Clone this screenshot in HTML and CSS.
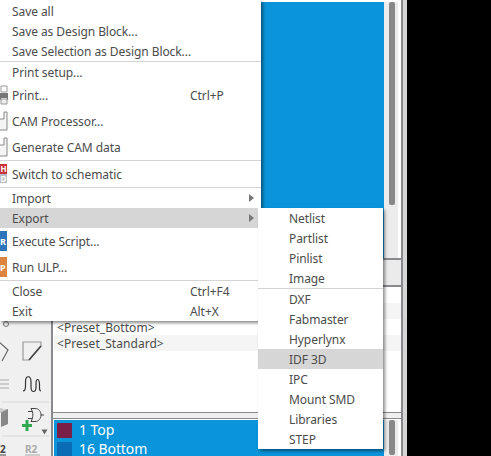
FILE: index.html
```html
<!DOCTYPE html>
<html lang="en">
<head>
  <meta charset="UTF-8" />
  <title>Board Editor - File menu</title>
  <link rel="stylesheet" href="styles.css">
</head>

<body>
<div class="app">
  <!-- Left toolbar -->
  <aside class="toolbar">
    <svg class="tool-icons" width="51" height="135" viewBox="0 321 51 135">
      <circle cx="6" cy="324" r="2.5" fill="none" stroke="#777" />
      <path d="M-2 341 L8 350 L2 361" fill="none" stroke="#666" stroke-width="1.2" />
      <path d="M23 342 H41 V346 L29 360 H23 Z" fill="none" stroke="#999" stroke-width="1.2" />
      <path d="M29 360 L41 346" fill="none" stroke="#444" stroke-width="1.6" />
      <path d="M0 380 H9 M0 384 H9 M0 388 H9" stroke="#aaa" stroke-width="1.2" />
      <path d="M23 391 C25 391 25.5 389 25.5 386 V382 C25.5 375 31 375 31 382 V387 C31 393 36 393 36 387 V384 C36 378 39 378 39.5 384 V388 C39.5 390 40 391 41 391" fill="none" stroke="#333" stroke-width="1.2" />
      <path d="M1 411 L8 409 V424 L1 427 Z" fill="#888" />
      <path d="M0 413 L6 410 L1 408 L0 408 Z" fill="#ccc" />
      <path d="M31 408.5 H35 C43 408.5 43 421.5 35 421.5 H31 C33.5 417 33.5 413 31 408.5 Z M28 411.5 H32.5 M28 418.5 H32.5 M41 415 H44" fill="none" stroke="#444" />
      <path d="M27 420 V431 M22 425.5 H32" stroke="#2fa84f" stroke-width="3" />
      <path d="M41.5 429.5 H47.5 L44.5 434.5 Z" fill="#666" />
      <path d="M2 402 H49 M2 436 H49" stroke="#d8d8d8" />
      <text class="tool-num" x="0" y="453">2</text>
      <path d="M0 455 H6" stroke="#444" />
      <text class="tool-r2" x="25" y="453">R2</text>
      <path d="M25 455 H40" stroke="#aaa" />
    </svg>
  </aside>

  <main class="panel">
    <!-- Top list -->
    <section class="top-pane">
      <div class="blue-list"></div>
      <div class="scroll"><div class="thumb"></div></div>
    </section>
    <div class="pane-head"></div>

    <!-- Presets -->
    <section class="presets">
      <div class="preset"></div>
      <div class="preset alt"></div>
      <div class="preset">&lt;Preset_Bottom&gt;</div>
      <div class="preset alt">&lt;Preset_Standard&gt;</div>
    </section>
    <div class="split"></div>

    <!-- Layers -->
    <section class="layer-pane">
      <div class="layers">
        <div class="layer"><span class="swatch swatch-top"></span>1 Top</div>
        <div class="layer layer-last"><span class="swatch swatch-bottom"></span>16 Bottom</div>
      </div>
      <div class="scroll"><div class="thumb"></div></div>
    </section>
  </main>
</div>

<!-- File menu -->
<nav class="menu file-menu">
  <div class="item"><span class="slot"></span><span class="label">Save all</span></div>
  <div class="item"><span class="slot"></span><span class="label">Save as Design Block...</span></div>
  <div class="item"><span class="slot"></span><span class="label">Save Selection as Design Block...</span></div>
  <hr class="sep">
  <div class="item"><span class="slot"></span><span class="label">Print setup...</span></div>
  <div class="item tall">
    <span class="slot">
      <svg width="8" height="20" viewBox="0 0 8 20">
        <path d="M1 1 H7 V7 H1 Z" fill="#fff" stroke="#999" />
        <path d="M0 8 H8 V15 H7 V13 H1 V15 H0 Z" fill="#777" />
        <path d="M1 14 H7 V19 H1 Z" fill="#eee" stroke="#999" />
      </svg>
    </span>
    <span class="label">Print...</span><span class="key">Ctrl+P</span>
  </div>
  <div class="item tall">
    <span class="slot">
      <svg width="8" height="20" viewBox="0 0 8 20">
        <path d="M0 8 H4 V1 H7 V19 H0" fill="#f4f4f4" stroke="#888" />
      </svg>
    </span>
    <span class="label">CAM Processor...</span>
  </div>
  <div class="item tall">
    <span class="slot">
      <svg width="8" height="20" viewBox="0 0 8 20">
        <path d="M0 8 H4 V1 H7 V19 H0" fill="#f4f4f4" stroke="#888" />
      </svg>
    </span>
    <span class="label">Generate CAM data</span>
  </div>
  <hr class="sep">
  <div class="item tall">
    <span class="slot">
      <svg width="8" height="20" viewBox="0 0 8 20">
        <rect width="7" height="10" fill="#c8323a" />
        <rect y="10" width="7" height="9" fill="#b8bcc4" />
        <text class="badge badge-small" x="0.5" y="8">H</text>
        <text class="badge badge-small" x="0.5" y="17.5">D</text>
      </svg>
    </span>
    <span class="label">Switch to schematic</span>
  </div>
  <hr class="sep">
  <div class="item"><span class="slot"></span><span class="label">Import</span><span class="arrow"></span></div>
  <div class="item active"><span class="slot"></span><span class="label">Export</span><span class="arrow"></span></div>
  <div class="item tall">
    <span class="slot">
      <svg width="8" height="20" viewBox="0 0 8 20">
        <rect width="7" height="20" fill="#2f74b8" />
        <text class="badge" x="0" y="14">R</text>
      </svg>
    </span>
    <span class="label">Execute Script...</span>
  </div>
  <div class="item tall">
    <span class="slot">
      <svg width="8" height="20" viewBox="0 0 8 20">
        <rect width="7" height="20" fill="#dd8440" />
        <text class="badge" x="0" y="14">P</text>
      </svg>
    </span>
    <span class="label">Run ULP...</span>
  </div>
  <hr class="sep">
  <div class="item"><span class="slot"></span><span class="label">Close</span><span class="key">Ctrl+F4</span></div>
  <div class="item"><span class="slot"></span><span class="label">Exit</span><span class="key">Alt+X</span></div>
</nav>

<!-- Export submenu -->
<nav class="menu export-menu">
  <div class="item"><span class="label">Netlist</span></div>
  <div class="item"><span class="label">Partlist</span></div>
  <div class="item"><span class="label">Pinlist</span></div>
  <div class="item"><span class="label">Image</span></div>
  <hr class="sep flush">
  <div class="item"><span class="label">DXF</span></div>
  <div class="item"><span class="label">Fabmaster</span></div>
  <div class="item"><span class="label">Hyperlynx</span></div>
  <div class="item active"><span class="label">IDF 3D</span></div>
  <div class="item"><span class="label">IPC</span></div>
  <div class="item"><span class="label">Mount SMD</span></div>
  <div class="item"><span class="label">Libraries</span></div>
  <div class="item"><span class="label">STEP</span></div>
</nav>
</body>
</html>
```

FILE: styles.css
```css
html,
body {
  height: 100%;
}

body {
  margin: 0;
  background-color: #000000;
  font-family: "Noto Sans", sans-serif;
  font-size: 12px;
  letter-spacing: -0.07px;
  color: #4c4c4c;
  overflow: hidden;
  position: relative;
}

.app {
  display: flex;
  width: 403px;
  height: 456px;
  padding-right: 4px;
  background-color: #d6d6d6;
}

.toolbar {
  width: 51px;
  flex-shrink: 0;
  background-color: #f0f0f0;
  display: flex;
  flex-direction: column;
  justify-content: flex-end;
}

.tool-icons {
  display: block;
}

.tool-num,
.tool-r2 {
  font-size: 10px;
  font-weight: bold;
  fill: #444444;
}

.tool-r2 {
  fill: #aaaaaa;
}

.panel {
  flex: 1;
  display: flex;
  flex-direction: column;
  border-left: 2px solid #8a8a8e;
  border-right: 2px solid #8a8a8e;
  background-color: #ffffff;
  min-width: 0;
}

.top-pane {
  display: flex;
  height: 256px;
  padding: 2px 0 0 1px;
}

.blue-list {
  flex: 1;
  background-color: #0a94da;
}

.scroll {
  width: 14px;
  margin-right: 3px;
  padding: 0 3px 0 5px;
  box-sizing: border-box;
  background-color: #ececec;
}

.thumb {
  width: 6px;
  height: 203px;
  border-radius: 2px;
  background-color: #888888;
}

.pane-head {
  height: 25px;
  background-color: #ebebeb;
  border-top: 2px solid #8a8a8e;
  border-bottom: 2px solid #8a8a8e;
}

.presets {
  height: 125px;
  padding-left: 1px;
  letter-spacing: 0.05px;
}

.preset {
  height: 16px;
  line-height: 18px;
  padding-left: 3px;
}

.preset.alt {
  background-color: #f5f5f5;
}

.split {
  height: 5px;
  background-color: #f0f0f0;
  border-top: 1px solid #8a8a8e;
  border-bottom: 1px solid #8a8a8e;
}

.layer-pane {
  flex: 1;
  display: flex;
  padding: 1px 0 0 1px;
  min-height: 0;
}

.layers {
  flex: 1;
  background-color: #0a94da;
  color: #ffffff;
  font-size: 14px;
  line-height: 12px;
  padding-left: 3px;
}

.layer {
  display: flex;
  align-items: center;
  gap: 7px;
  height: 20px;
}

/* last row is cut by the window edge */
.layer-last {
  height: 14px;
  padding-top: 2px;
}

.swatch {
  width: 15px;
  height: 15px;
}

.swatch-top {
  background-color: #7a2048;
}

.swatch-bottom {
  height: 14px;
  background-color: #0a6cb4;
}

.layer-pane .thumb {
  height: 35px;
}

/* Menus sit on top of the window */
.menu {
  position: absolute;
  background-color: #ffffff;
  box-shadow: 2px 2px 3px rgba(0, 0, 0, 0.45);
}

.file-menu {
  left: 0;
  top: 0;
  width: 261px;
  height: 321px;
  padding-top: 1px;
  box-sizing: border-box;
}

.export-menu {
  left: 258px;
  top: 208px;
  width: 125px;
  height: 241px;
}

.item {
  display: flex;
  align-items: center;
  height: 20px;
}

.item.tall {
  height: 26px;
}

.item.active {
  background-color: #d6d6d6;
}

.slot {
  width: 12px;
  flex-shrink: 0;
  display: flex;
}

.export-menu .label {
  padding-left: 31px;
}

.label {
  flex: 1;
  white-space: nowrap;
}

.key {
  width: 71px;
}

.arrow {
  width: 0;
  height: 0;
  margin-right: 7px;
  border-left: 5px solid #777777;
  border-top: 4px solid transparent;
  border-bottom: 4px solid transparent;
}

.sep {
  height: 1px;
  margin: 0;
  border: none;
  background-color: #d4d4d4;
}

.badge {
  font-size: 9px;
  font-weight: bold;
  fill: #ffffff;
}

.badge-small {
  font-size: 8px;
}
```
